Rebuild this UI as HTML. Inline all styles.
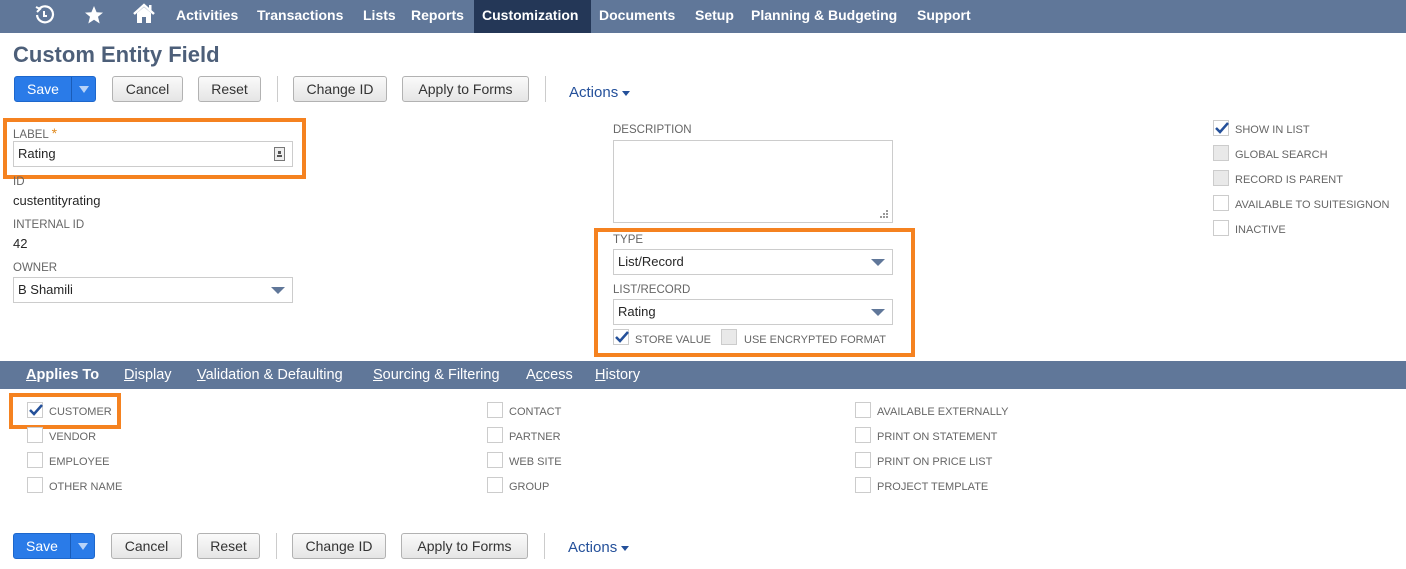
<!DOCTYPE html>
<html><head><style>
*{margin:0;padding:0;box-sizing:border-box}
body{width:1406px;height:569px;position:relative;background:#fff;font-family:"Liberation Sans",sans-serif;overflow:hidden;color:#262626}
.a{position:absolute;white-space:nowrap}
.nav{position:absolute;left:0;top:0;width:1406px;height:33px;background:#607799}
.nav .a{color:#fff;font-weight:bold;font-size:14px;top:7px}
.lbl{font-size:11.5px;color:#666;text-transform:uppercase}
.val{font-size:13px;color:#262626}
.btn{position:absolute;height:26px;border:1px solid #b2b2b2;border-radius:3px;background:linear-gradient(#fafafa,#e5e5e5);font-size:14px;color:#333;text-align:center;line-height:24px}
.save{position:absolute;height:26px;width:82px;border-radius:3px;background:#2a7be8;border:1px solid #1d67cc;color:#fff;font-size:14px;line-height:24px}
.save span{position:absolute;left:0;width:56px;text-align:center}
.save i{position:absolute;left:56px;top:0;width:1px;height:24px;background:#1a5cb8}
.save b{position:absolute;left:64px;top:9px;border-left:5px solid transparent;border-right:5px solid transparent;border-top:7px solid #b8d3f8}
.div{position:absolute;width:1px;height:26px;background:#ccc}
.act{position:absolute;color:#24509a;font-size:15px}
.act b{display:inline-block;margin-left:4px;vertical-align:middle;border-left:4px solid transparent;border-right:4px solid transparent;border-top:5px solid #24509a}
.inp{position:absolute;height:26px;border:1px solid #ccc;background:#fff;font-size:13px;padding-left:4px;line-height:24px}
.dd{position:absolute;right:7px;top:9px;border-left:7px solid transparent;border-right:7px solid transparent;border-top:7px solid #607799}
.cb{position:absolute;width:16px;height:16px;border:1px solid #ccc;background:#fff}
.cb.g{background:#e9e9e9}
.cb svg{position:absolute;left:1px;top:0px}
.cl{position:absolute;font-size:11px;color:#666}
.org{position:absolute;border:4px solid #f58220}
.tabs{position:absolute;left:0;top:361px;width:1406px;height:28px;background:#607799}
.tabs .a{color:#fff;font-size:14.5px;top:6px}
.tabs u{text-decoration:underline}
</style></head><body>
<div class="nav">
<div class="a" style="left:474px;top:0;width:117px;height:33px;background:#243757"></div>
<svg class="a" style="left:33px;top:4px" width="22" height="22" viewBox="0 0 22 22"><path d="M6 5 A8 8 0 1 1 4 11" fill="none" stroke="#fff" stroke-width="2.2"/><path d="M3 3 L7 5 L4 8" fill="none" stroke="#fff" stroke-width="2"/><path d="M11 7 V12 H14" fill="none" stroke="#fff" stroke-width="2"/></svg>
<svg class="a" style="left:84px;top:5px" width="20" height="20" viewBox="0 0 20 20"><path d="M10 1 L12.6 7.3 L19 7.6 L14 11.8 L15.7 18.5 L10 14.8 L4.3 18.5 L6 11.8 L1 7.6 L7.4 7.3 Z" fill="#fff"/></svg>
<svg class="a" style="left:132px;top:3px" width="24" height="22" viewBox="0 0 24 22"><path d="M2 11 L12 2 L22 11" fill="none" stroke="#fff" stroke-width="2.5"/><path d="M5 10 V20 H19 V10 L12 4 Z M10 20 V14 H14 V20" fill="#fff" fill-rule="evenodd"/><rect x="17" y="2" width="2.5" height="5" fill="#fff"/></svg>
<div class="a" style="left:176px">Activities</div>
<div class="a" style="left:257px">Transactions</div>
<div class="a" style="left:363px">Lists</div>
<div class="a" style="left:411px">Reports</div>
<div class="a" style="left:482px">Customization</div>
<div class="a" style="left:599px">Documents</div>
<div class="a" style="left:695px">Setup</div>
<div class="a" style="left:751px">Planning &amp; Budgeting</div>
<div class="a" style="left:917px">Support</div>
</div>
<div class="a" style="left:13px;top:42px;font-size:22px;font-weight:bold;color:#4d5f79">Custom Entity Field</div>

<div class="save" style="left:14px;top:76px"><span>Save</span><i></i><b></b></div>
<div class="btn" style="left:112px;top:76px;width:71px">Cancel</div>
<div class="btn" style="left:198px;top:76px;width:63px">Reset</div>
<div class="div" style="left:277px;top:76px"></div>
<div class="btn" style="left:293px;top:76px;width:94px">Change ID</div>
<div class="btn" style="left:402px;top:76px;width:127px">Apply to Forms</div>
<div class="div" style="left:545px;top:76px"></div>
<div class="act" style="left:569px;top:84px">Actions<b></b></div>

<div class="org" style="left:3px;top:118px;width:303px;height:61px"></div>
<div class="a lbl" style="left:13px;top:125px">Label <span style="color:#e08a1e;font-size:14px">*</span></div>
<div class="inp" style="left:13px;top:141px;width:280px">Rating
<svg style="position:absolute;right:7px;top:5px" width="11" height="14" viewBox="0 0 11 14"><rect x="0.5" y="0.5" width="10" height="13" fill="#eee" stroke="#777"/><rect x="4" y="4" width="3" height="3" fill="#555"/><rect x="3" y="8" width="5" height="2" fill="#555"/></svg></div>
<div class="a lbl" style="left:13px;top:176px">ID</div>
<div class="a val" style="left:13px;top:193px">custentityrating</div>
<div class="a lbl" style="left:13px;top:219px">Internal ID</div>
<div class="a val" style="left:13px;top:236px">42</div>
<div class="a lbl" style="left:13px;top:262px">Owner</div>
<div class="inp" style="left:13px;top:277px;width:280px">B Shamili<div class="dd"></div></div>

<div class="a lbl" style="left:613px;top:124px">Description</div>
<div class="a" style="left:613px;top:140px;width:280px;height:83px;border:1px solid #ccc"><svg style="position:absolute;right:3px;bottom:3px" width="9" height="9"><g fill="#999"><rect x="6" y="0" width="2" height="2"/><rect x="3" y="3" width="2" height="2"/><rect x="6" y="3" width="2" height="2"/><rect x="0" y="6" width="2" height="2"/><rect x="3" y="6" width="2" height="2"/><rect x="6" y="6" width="2" height="2"/></g></svg></div>

<div class="org" style="left:594px;top:228px;width:321px;height:129px"></div>
<div class="a lbl" style="left:613px;top:234px">Type</div>
<div class="inp" style="left:613px;top:249px;width:280px">List/Record<div class="dd"></div></div>
<div class="a lbl" style="left:613px;top:284px">List/Record</div>
<div class="inp" style="left:613px;top:299px;width:280px">Rating<div class="dd"></div></div>
<div class="cb" style="left:613px;top:329px"><svg width="14" height="14" viewBox="0 0 14 14"><path d="M1 7 L5 11 L13 2" fill="none" stroke="#24509a" stroke-width="2.5"/></svg></div>
<div class="cl" style="left:635px;top:334px">STORE VALUE</div>
<div class="cb g" style="left:721px;top:329px"></div>
<div class="cl" style="left:744px;top:334px">USE ENCRYPTED FORMAT</div>

<div class="cb" style="left:1213px;top:120px"><svg width="14" height="14" viewBox="0 0 14 14"><path d="M1 7 L5 11 L13 2" fill="none" stroke="#24509a" stroke-width="2.5"/></svg></div>
<div class="cl" style="left:1235px;top:124px">SHOW IN LIST</div>
<div class="cb g" style="left:1213px;top:145px"></div><div class="cl" style="left:1235px;top:149px">GLOBAL SEARCH</div>
<div class="cb g" style="left:1213px;top:170px"></div><div class="cl" style="left:1235px;top:174px">RECORD IS PARENT</div>
<div class="cb" style="left:1213px;top:195px"></div><div class="cl" style="left:1235px;top:199px">AVAILABLE TO SUITESIGNON</div>
<div class="cb" style="left:1213px;top:220px"></div><div class="cl" style="left:1235px;top:224px">INACTIVE</div>

<div class="tabs">
<div class="a" style="left:26px;font-weight:bold"><u>A</u>pplies To</div>
<div class="a" style="left:124px"><u>D</u>isplay</div>
<div class="a" style="left:197px"><u>V</u>alidation &amp; Defaulting</div>
<div class="a" style="left:373px"><u>S</u>ourcing &amp; Filtering</div>
<div class="a" style="left:526px">A<u>c</u>cess</div>
<div class="a" style="left:595px"><u>H</u>istory</div>
</div>

<div class="org" style="left:9px;top:393px;width:112px;height:36px"></div>
<div class="cb" style="left:27px;top:402px"><svg width="14" height="14" viewBox="0 0 14 14"><path d="M1 7 L5 11 L13 2" fill="none" stroke="#24509a" stroke-width="2.5"/></svg></div>
<div class="cl" style="left:49px;top:406px">CUSTOMER</div>
<div class="cb" style="left:27px;top:427px"></div><div class="cl" style="left:49px;top:431px">VENDOR</div>
<div class="cb" style="left:27px;top:452px"></div><div class="cl" style="left:49px;top:456px">EMPLOYEE</div>
<div class="cb" style="left:27px;top:477px"></div><div class="cl" style="left:49px;top:481px">OTHER NAME</div>
<div class="cb" style="left:487px;top:402px"></div><div class="cl" style="left:509px;top:406px">CONTACT</div>
<div class="cb" style="left:487px;top:427px"></div><div class="cl" style="left:509px;top:431px">PARTNER</div>
<div class="cb" style="left:487px;top:452px"></div><div class="cl" style="left:509px;top:456px">WEB SITE</div>
<div class="cb" style="left:487px;top:477px"></div><div class="cl" style="left:509px;top:481px">GROUP</div>
<div class="cb" style="left:855px;top:402px"></div><div class="cl" style="left:877px;top:406px">AVAILABLE EXTERNALLY</div>
<div class="cb" style="left:855px;top:427px"></div><div class="cl" style="left:877px;top:431px">PRINT ON STATEMENT</div>
<div class="cb" style="left:855px;top:452px"></div><div class="cl" style="left:877px;top:456px">PRINT ON PRICE LIST</div>
<div class="cb" style="left:855px;top:477px"></div><div class="cl" style="left:877px;top:481px">PROJECT TEMPLATE</div>

<div class="save" style="left:13px;top:533px"><span>Save</span><i></i><b></b></div>
<div class="btn" style="left:111px;top:533px;width:71px">Cancel</div>
<div class="btn" style="left:197px;top:533px;width:63px">Reset</div>
<div class="div" style="left:276px;top:533px"></div>
<div class="btn" style="left:292px;top:533px;width:94px">Change ID</div>
<div class="btn" style="left:401px;top:533px;width:127px">Apply to Forms</div>
<div class="div" style="left:544px;top:533px"></div>
<div class="act" style="left:568px;top:539px">Actions<b></b></div>
</body></html>
